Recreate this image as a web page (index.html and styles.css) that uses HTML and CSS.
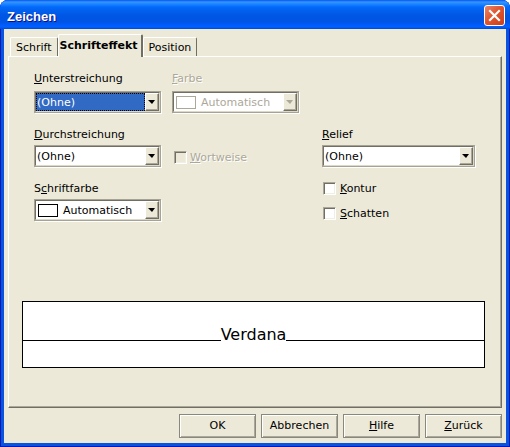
FILE: index.html
```html
<!DOCTYPE html>
<html lang="de">
<head>
<meta charset="utf-8">
<title>Zeichen</title>
<link rel="stylesheet" href="styles.css">
</head>
<body>
<div class="window">
  <div class="titlebar">
    <span class="title">Zeichen</span>
    <div class="close">
      <svg width="13" height="13" viewBox="0 0 13 13"><path d="M2 2 L11 11 M11 2 L2 11" stroke="#fff" stroke-width="2.2" stroke-linecap="square"/></svg>
    </div>
  </div>
  <div class="client">
    <div class="tabs">
      <div class="tab">Schrift</div>
      <div class="tab sel">Schrifteffekt</div>
      <div class="tab">Position</div>
    </div>
    <div class="panel">
      <div class="cols">
        <div class="col c1">
          <div class="label first"><u>U</u>nterstreichung</div>
          <div class="combo"><div class="combo-in">
            <div class="field focus"><span class="ftext">(Ohne)</span></div>
            <div class="drop"><i class="tri"></i></div>
          </div></div>
          <div class="label"><u>D</u>urchstreichung</div>
          <div class="combo"><div class="combo-in">
            <div class="field"><span class="ftext">(Ohne)</span></div>
            <div class="drop"><i class="tri"></i></div>
          </div></div>
          <div class="label">S<u>c</u>hriftfarbe</div>
          <div class="combo"><div class="combo-in">
            <div class="field color"><span class="swatch"></span><span>Automatisch</span></div>
            <div class="drop"><i class="tri"></i></div>
          </div></div>
        </div>
        <div class="col c2">
          <div class="label first disabled"><u>F</u>arbe</div>
          <div class="combo disabled"><div class="combo-in">
            <div class="field color"><span class="swatch"></span><span>Automatisch</span></div>
            <div class="drop"><i class="tri"></i></div>
          </div></div>
          <div class="check disabled wortweise"><span class="box"></span><span><u>W</u>ortweise</span></div>
        </div>
        <div class="col c3">
          <div class="label relief"><u>R</u>elief</div>
          <div class="combo wide"><div class="combo-in">
            <div class="field"><span class="ftext">(Ohne)</span></div>
            <div class="drop"><i class="tri"></i></div>
          </div></div>
          <div class="check kontur"><span class="box"></span><span><u>K</u>ontur</span></div>
          <div class="check schatten"><span class="box"></span><span><u>S</u>chatten</span></div>
        </div>
      </div>
      <div class="preview">
        <div class="preview-row">
          <span class="rule"></span>
          <span class="sample">Verdana</span>
          <span class="rule"></span>
        </div>
      </div>
    </div>
    <div class="buttons">
      <div class="btn">OK</div>
      <div class="btn">Abbrechen</div>
      <div class="btn"><u>H</u>ilfe</div>
      <div class="btn"><u>Z</u>urück</div>
    </div>
  </div>
</div>
</body>
</html>
```
FILE: styles.css
```css
html, body {
  margin: 0;
  padding: 0;
  background: #ffffff;
}
body {
  width: 510px;
  height: 447px;
  overflow: hidden;
  font-family: "DejaVu Sans", Verdana, sans-serif;
  font-size: 11px;
  color: #000;
}
u {
  text-decoration: underline;
  text-underline-offset: 1px;
}
.window {
  width: 510px;
  height: 447px;
  display: flex;
  flex-direction: column;
  background: #0A52E0;
  border-radius: 8px 8px 0 0;
  box-shadow: inset 1px 0 #0019B0, inset -1px 0 #0019B0, inset 0 -1px #0019B0;
}
.titlebar {
  height: 29px;
  flex: none;
  display: flex;
  justify-content: space-between;
  align-items: flex-start;
  border-radius: 8px 8px 0 0;
  background: linear-gradient(to bottom, #0058EE 0px, #3A93FF 2px, #288EFF 3px, #127DFF 5px, #0369FC 7px, #0262EE 10px, #0057E5 15px, #0054E3 22px, #005BFF 25px, #0061FF 27px, #0048D4 29px);
}
.title {
  padding: 3px 0 0 7px;
  line-height: 27px;
  font-family: "Liberation Sans", Arial, sans-serif;
  font-weight: bold;
  font-size: 13px;
  color: #fff;
  text-shadow: 1px 1px #0F1089;
}
.close {
  width: 21px;
  height: 21px;
  box-sizing: border-box;
  margin: 5px 5px 0 0;
  border: 1px solid #fff;
  border-radius: 3px;
  background: linear-gradient(135deg, #E8876A 0%, #E0562F 45%, #C8401C 100%);
  display: flex;
  align-items: center;
  justify-content: center;
}
.close svg {
  display: block;
}
.client {
  flex: 1;
  margin: 0 4px 4px;
  background: #ECE9D8;
  display: flex;
  flex-direction: column;
}
.tabs {
  height: 22px;
  margin-top: 5px;
  padding-left: 6px;
  display: flex;
  align-items: flex-end;
}
.tab {
  height: 19px;
  box-sizing: border-box;
  padding: 3px 5px 0;
  line-height: 13px;
  border-top: 1px solid #fff;
  border-left: 1px solid #fff;
  border-right: 1px solid #716F64;
  border-radius: 2px 2px 0 0;
  background: #ECE9D8;
  white-space: nowrap;
}
.tab.sel {
  height: 23px;
  margin-bottom: -1px;
  padding: 4px 3px 0 1px;
  font-weight: bold;
  border-right: 2px solid #716F64;
  position: relative;
  z-index: 1;
}
.panel {
  height: 352px;
  box-sizing: border-box;
  margin: 0 4px;
  border-top: 1px solid #fff;
  border-left: 1px solid #fff;
  border-right: 1px solid #716F64;
  border-bottom: 1px solid #716F64;
  box-shadow: inset -1px -1px #ACA899;
  display: flex;
  flex-direction: column;
}
.cols {
  display: flex;
  padding: 15px 0 0 25px;
}
.col {
  display: flex;
  flex-direction: column;
  align-items: flex-start;
}
.c1 { width: 127px; }
.c2 { width: 127px; margin-left: 11px; }
.c3 { width: 153px; margin-left: 23px; }
.label {
  height: 13px;
  line-height: 13px;
  margin: 15px 0 4px;
  white-space: nowrap;
}
.label.first {
  margin: 0 0 6px;
}
.label.relief {
  margin-top: 56px;
}
.disabled .ftext,
.disabled.label,
.combo.disabled .field,
.check.disabled {
  color: #ACA899;
  text-shadow: 1px 1px #fff;
}
.combo {
  width: 127px;
  height: 22px;
  box-sizing: border-box;
  border: 1px solid #A6A393;
  box-shadow: 1px 1px 0 #fff;
}
.combo.wide {
  width: 153px;
}
.combo-in {
  height: 100%;
  box-sizing: border-box;
  border: 1px solid;
  border-color: #716F64 #DCD9C8 #DCD9C8 #716F64;
  display: flex;
  background: #fff;
}
.field {
  flex: 1;
  display: flex;
  align-items: center;
  padding-left: 1px;
  line-height: 13px;
  white-space: nowrap;
  overflow: hidden;
}
.field.focus {
  background: #316AC5;
  color: #fff;
  border: 1px dotted #000;
  padding-left: 0;
}
.combo.disabled .combo-in {
  background: #fff;
}
.field.color {
  padding-left: 2px;
}
.swatch {
  width: 20px;
  height: 13px;
  box-sizing: border-box;
  border: 1px solid #000;
  background: #fff;
  margin-right: 5px;
  flex: none;
}
.combo.disabled .swatch {
  border-color: #ACA899;
}
.drop {
  width: 14px;
  flex: none;
  box-sizing: border-box;
  background: #ECE9D8;
  border-top: 1px solid #fff;
  border-left: 1px solid #fff;
  border-right: 1px solid #716F64;
  border-bottom: 1px solid #716F64;
  box-shadow: inset -1px -1px #ACA899;
  display: flex;
  align-items: center;
  justify-content: center;
}
.tri {
  display: block;
  width: 0;
  height: 0;
  border-left: 4px solid transparent;
  border-right: 3px solid transparent;
  border-top: 4px solid #000;
  margin-right: 1px;
}
.combo.disabled .tri {
  border-top-color: #ACA899;
}
.check {
  display: flex;
  align-items: center;
  height: 13px;
  line-height: 13px;
  white-space: nowrap;
}
.box {
  width: 13px;
  height: 13px;
  box-sizing: border-box;
  flex: none;
  border: 1px solid;
  border-color: #ACA899 #fff #fff #ACA899;
  box-shadow: inset 1px 1px #716F64, inset -1px -1px #F1EFE2;
  background: #fff;
  margin-right: 3px;
}
.check.disabled .box {
  background: #ECE9D8;
}
.wortweise {
  margin: 38px 0 0 2px;
}
.kontur {
  margin: 15px 0 0 1px;
}
.schatten {
  margin: 12px 0 0 1px;
}
.kontur .box,
.schatten .box {
  margin-right: 4px;
}
.preview {
  margin: 80px 0 0 13px;
  width: 463px;
  height: 67px;
  box-sizing: border-box;
  border: 1px solid #000;
  background: #fff;
}
.preview-row {
  height: 39px;
  display: flex;
  align-items: flex-end;
}
.rule {
  flex: 1;
  border-bottom: 1px solid #000;
}
.sample {
  font-family: "DejaVu Sans", Verdana, sans-serif;
  font-size: 16px;
  line-height: 19px;
  margin-bottom: -3px;
  white-space: nowrap;
}
.buttons {
  margin-top: 6px;
  padding-right: 4px;
  display: flex;
  justify-content: flex-end;
  gap: 5px;
}
.btn {
  width: 77px;
  height: 24px;
  box-sizing: border-box;
  border: 1px solid #8A887C;
  box-shadow: inset 1px 1px #fff, inset -1px -1px #ACA899;
  background: #ECE9D8;
  text-align: center;
  line-height: 22px;
  white-space: nowrap;
}
```
